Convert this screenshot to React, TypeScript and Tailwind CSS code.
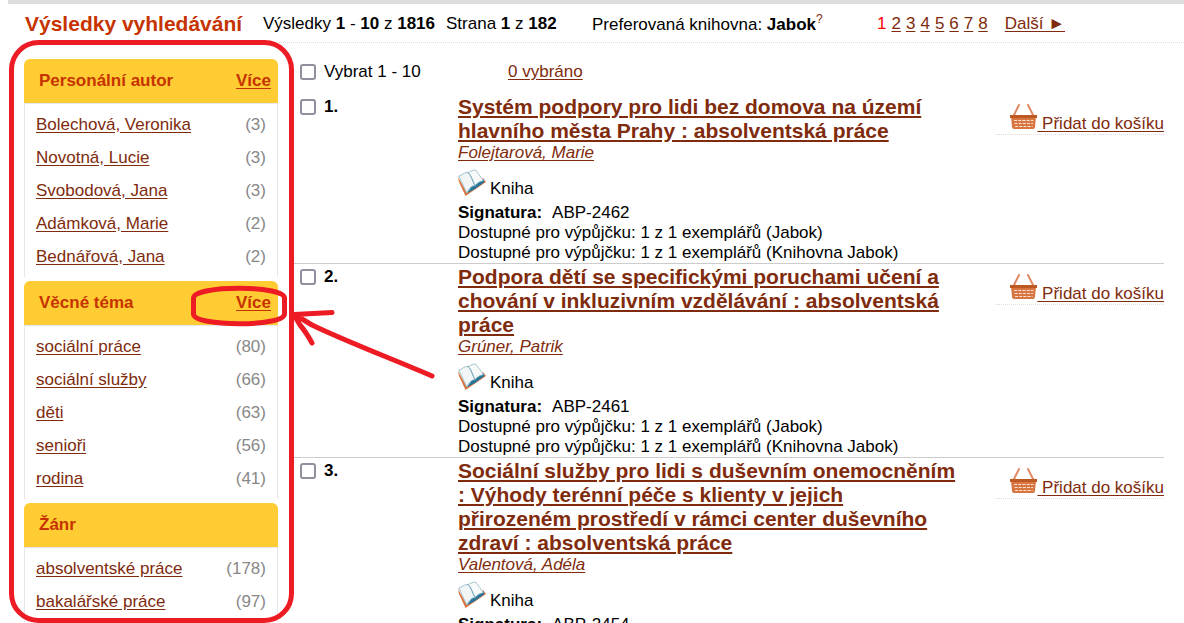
type Facet = {
  title: string;
  more: boolean;
  items: { name: string; count: number }[];
};

type Result = {
  id: number;
  title: string;
  author: string;
  signature: string;
};

const facets: Facet[] = [
  {
    title: "Personální autor",
    more: true,
    items: [
      { name: "Bolechová, Veronika", count: 3 },
      { name: "Novotná, Lucie", count: 3 },
      { name: "Svobodová, Jana", count: 3 },
      { name: "Adámková, Marie", count: 2 },
      { name: "Bednářová, Jana", count: 2 },
    ],
  },
  {
    title: "Věcné téma",
    more: true,
    items: [
      { name: "sociální práce", count: 80 },
      { name: "sociální služby", count: 66 },
      { name: "děti", count: 63 },
      { name: "senioři", count: 56 },
      { name: "rodina", count: 41 },
    ],
  },
  {
    title: "Žánr",
    more: false,
    items: [
      { name: "absolventské práce", count: 178 },
      { name: "bakalářské práce", count: 97 },
    ],
  },
];

const results: Result[] = [
  {
    id: 1,
    title:
      "Systém podpory pro lidi bez domova na území hlavního města Prahy : absolventská práce",
    author: "Folejtarová, Marie",
    signature: "ABP-2462",
  },
  {
    id: 2,
    title:
      "Podpora dětí se specifickými poruchami učení a chování v inkluzivním vzdělávání : absolventská práce",
    author: "Grúner, Patrik",
    signature: "ABP-2461",
  },
  {
    id: 3,
    title:
      "Sociální služby pro lidi s duševním onemocněním : Výhody terénní péče s klienty v jejich přirozeném prostředí v rámci center duševního zdraví : absolventská práce",
    author: "Valentová, Adéla",
    signature: "ABP-2454",
  },
];

const pages = [2, 3, 4, 5, 6, 7, 8];

const linkClass = "text-[#802b0d] underline underline-offset-2";
const checkboxClass =
  "size-4 shrink-0 appearance-none rounded-[3px] border-2 border-[#8f8f9d] bg-white checked:bg-[#802b0d]";

const BookIcon = () => (
  <svg width="28" height="28" viewBox="0 0 28 28" aria-hidden="true">
    <path d="M0 8 L1 13 L7.5 27 L28 13 L25 9 L17 18 L9 24 Z" fill="#dd7440" />
    <path d="M8.5 24.5 L14 17 L25.5 10 L26.5 13 L17 20 Z" fill="#28779a" />
    <path
      d="M0.8 7 C4 6.500 6 3 9.500 3.500 C13 5 14 10 17 16.500 C13 17 11 19 8.800 24 Z"
      fill="#f1f5f6"
      stroke="#8db6c5"
      strokeWidth="0.8"
    />
    <path
      d="M9.500 3.500 C12 3.500 13.500 0.800 17.500 1 L25.500 11.500 C22 12.500 20 13 17 16.500 C14 11 13 5 9.500 3.500 Z"
      fill="#f8fafa"
      stroke="#8db6c5"
      strokeWidth="0.8"
    />
    <path
      d="M9.500 3.500 C13 5.500 14 10.500 17 16.500"
      stroke="#7aa9bb"
      strokeWidth="1"
      fill="none"
    />
  </svg>
);

const BasketIcon = () => (
  <svg
    className="mb-1"
    width="27"
    height="27"
    viewBox="0 0 27 27"
    aria-hidden="true"
  >
    <path
      d="M4 12 L9 2 M23 12 L18 2"
      stroke="#e28a64"
      strokeWidth="2"
      strokeLinecap="round"
    />
    <path
      d="M1 13 H26 L25 24 Q24.800 26 23 26 H4 Q2.200 26 2 24 Z"
      fill="#d97540"
    />
    <rect x="0" y="12" width="27" height="3" fill="#bd5a24" />
    <path
      d="M4 17.500 H23.500 M4.500 20.500 H23 M5 23.500 H22.500"
      stroke="#fbe4d6"
      strokeWidth="1.200"
      strokeDasharray="3 1.200"
    />
  </svg>
);

// Hand drawn red marks over the page
const Marks = () => (
  <svg
    className="pointer-events-none absolute left-0 top-0"
    width="450"
    height="623"
    viewBox="0 0 450 623"
    fill="none"
    stroke="#ed1c24"
    strokeWidth="5"
    strokeLinecap="round"
    strokeLinejoin="round"
    aria-hidden="true"
  >
    <rect x="11.500" y="42.500" width="280" height="578" rx="27" />
    <path d="M193.500 298 C193.500 285 284.500 285 284.500 298 V314 C284.500 327 193.500 327 193.500 314 Z" />
    <path d="M432 376 C390 358 345 341 312 325 L297 316 M332 312.500 L294 314.500 M294 315 L300 325 Q306 332 312 343" />
  </svg>
);

const FacetBox = ({ facet }: { facet: Facet }) => (
  <section>
    <h2 className="flex h-11 items-center justify-between rounded-t-md bg-[#fc3] pl-[15px] pr-[7px] font-bold text-[#c63300]">
      {facet.title}
      {facet.more && (
        <a href="#" className="underline underline-offset-2">
          Více
        </a>
      )}
    </h2>
    <ul className="border-x border-t border-[#e6e6ee] px-[11px] py-1">
      {facet.items.map((item) => (
        <li
          key={item.name}
          className="flex h-[33px] items-center justify-between"
        >
          <a href="#" className={linkClass}>
            {item.name}
          </a>
          <span className="text-[#888]">({item.count})</span>
        </li>
      ))}
    </ul>
  </section>
);

const ResultRow = ({ result }: { result: Result }) => (
  <li className="ml-4 flex border-b border-[#ccc] pt-px">
    <div className="flex w-[164px] shrink-0 items-start gap-2 pl-[6px]">
      <input
        type="checkbox"
        id={`result-${result.id}`}
        className={`${checkboxClass} mt-1`}
      />
      <label htmlFor={`result-${result.id}`} className="font-bold leading-6">
        {result.id}.
      </label>
    </div>
    <div className="min-w-0 flex-1 pr-9">
      <h3 className="text-[21px] font-bold leading-6">
        <a href="#" className={linkClass}>
          {result.title}
        </a>
      </h3>
      <p>
        <a href="#" className={`${linkClass} italic`}>
          {result.author}
        </a>
      </p>
      <div className="flex h-10 items-center gap-1">
        <BookIcon />
        <span className="pt-3">Kniha</span>
      </div>
      <p>
        <b>Signatura:</b>
        <span className="ml-2.5">{result.signature}</span>
      </p>
      <p>Dostupné pro výpůjčku: 1 z 1 exemplářů (Jabok)</p>
      <p>Dostupné pro výpůjčku: 1 z 1 exemplářů (Knihovna Jabok)</p>
    </div>
    <div className="w-[168px] shrink-0">
      <a
        href="#"
        className="flex items-end justify-end border-b border-dotted border-[#ddd] pt-2 text-[#802b0d]"
      >
        <BasketIcon />
        <span className="whitespace-pre underline underline-offset-2">
          {" Přidat do košíku"}
        </span>
      </a>
    </div>
  </li>
);

export default function App() {
  return (
    <div className="relative h-screen overflow-hidden bg-white font-['Liberation_Sans',Arial,sans-serif] text-[17px] leading-5 text-black">
      <div className="ml-2 h-1 bg-[#ddd]" />
      <header className="flex h-[38px] items-center pl-[25px] pt-0.5">
        <h1 className="w-[238px] text-[21px] font-bold text-[#c63300]">
          Výsledky vyhledávání
        </h1>
        <p className="w-[183px]">
          Výsledky <b>1</b> - <b>10</b> z <b>1816</b>
        </p>
        <p className="w-[146px]">
          Strana <b>1</b> z <b>182</b>
        </p>
        <p className="w-[285px]">
          Preferovaná knihovna: <b>Jabok</b>
          <a href="#" className="align-super text-xs leading-none text-[#802b0d]">
            ?
          </a>
        </p>
        <nav className="flex gap-[5px]">
          <span className="text-[#f00]">1</span>
          {pages.map((page) => (
            <a key={page} href="#" className={linkClass}>
              {page}
            </a>
          ))}
          <a href="#" className={`${linkClass} ml-3`}>
            Další ►
          </a>
        </nav>
      </header>
      <div className="flex items-start">
        <aside className="ml-6 mt-[17px] flex w-[254px] shrink-0 flex-col gap-1">
          {facets.map((facet) => (
            <FacetBox key={facet.title} facet={facet} />
          ))}
        </aside>
        <main className="min-w-0 flex-1 border-t border-dotted border-[#ddd] pt-[19px]">
          <div className="flex pb-3 pl-[22px]">
            <div className="flex w-[208px] items-center gap-2">
              <input type="checkbox" id="select-all" className={checkboxClass} />
              <label htmlFor="select-all">Vybrat 1 - 10</label>
            </div>
            <a href="#" className={linkClass}>
              0 vybráno
            </a>
          </div>
          <ul className="pr-5">
            {results.map((result) => (
              <ResultRow key={result.id} result={result} />
            ))}
          </ul>
        </main>
      </div>
      <Marks />
    </div>
  );
}
